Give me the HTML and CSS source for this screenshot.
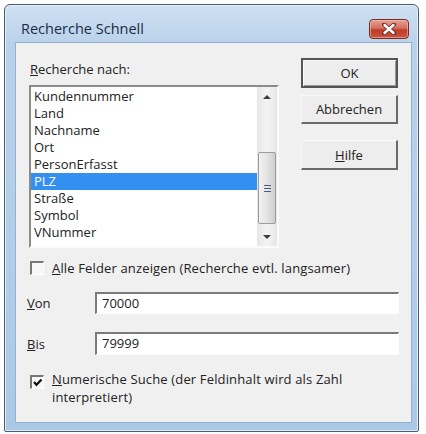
FILE: index.html
```html
<!DOCTYPE html>
<html lang="de">
<head>
<meta charset="utf-8">
<title>Recherche Schnell</title>
<link rel="stylesheet" href="styles.css">
</head>
<body>
<div class="window">
  <div class="titlebar">
    <span class="title">Recherche Schnell</span>
    <button class="close" aria-label="Schließen">
      <svg width="14" height="12" viewBox="0 0 14 12">
        <path d="M2 1.5 L12 10.5 M12 1.5 L2 10.5" stroke="#6b2b22" stroke-width="4" stroke-linecap="round"/>
        <path d="M2.5 2 L11.5 10 M11.5 2 L2.5 10" stroke="#ffffff" stroke-width="2.4" stroke-linecap="round"/>
      </svg>
    </button>
  </div>
  <div class="client">
    <div class="top">
      <div class="left">
        <div class="label"><u>R</u>echerche nach:</div>
        <div class="listbox">
          <ul class="items">
            <li>Kundennummer</li>
            <li>Land</li>
            <li>Nachname</li>
            <li>Ort</li>
            <li>PersonErfasst</li>
            <li class="selected">PLZ</li>
            <li>Straße</li>
            <li>Symbol</li>
            <li>VNummer</li>
          </ul>
          <div class="scrollbar">
            <div class="sb-btn"><span class="tri up"></span></div>
            <div class="track">
              <div class="thumb"><span class="grip"></span></div>
            </div>
            <div class="sb-btn"><span class="tri down"></span></div>
          </div>
        </div>
      </div>
      <div class="buttons">
        <button class="btn default">OK</button>
        <button class="btn cancel">Abbrechen</button>
        <button class="btn help"><u>H</u>ilfe</button>
      </div>
    </div>
    <div class="check all">
      <span class="box"></span>
      <span class="ctext"><u>A</u>lle Felder anzeigen (Recherche evtl. langsamer)</span>
    </div>
    <div class="field von">
      <span class="flabel"><u>V</u>on</span>
      <div class="input">70000</div>
    </div>
    <div class="field bis">
      <span class="flabel"><u>B</u>is</span>
      <div class="input">79999</div>
    </div>
    <div class="check num">
      <span class="box">
        <svg width="11" height="11" viewBox="0 0 11 11"><path d="M2 5 L4.5 7.8 L9.5 2.5" fill="none" stroke="#111" stroke-width="2.2"/></svg>
      </span>
      <span class="ctext"><u>N</u>umerische Suche (der Feldinhalt wird als Zahl<br>interpretiert)</span>
    </div>
  </div>
</div>
</body>
</html>
```

FILE: styles.css
```css
html, body {
  margin: 0;
  padding: 0;
  background: #ffffff;
}

body {
  font-family: "Open Sans", "Noto Sans", "DejaVu Sans", sans-serif;
  font-size: 13px;
  color: #222;
}

.window {
  margin: 4px 0 0 4px;
  width: 413px;
  height: 426px;
  border: 1px solid #4a5c70;
  border-radius: 6px 6px 2px 2px;
  background: linear-gradient(to bottom, #d0e1f2 0px, #b9d2eb 38px, #abc9e7 100%);
  display: flex;
  flex-direction: column;
  box-shadow: inset 0 0 0 1px #e4eef8;
}

.titlebar {
  height: 38px;
  display: flex;
  align-items: flex-start;
  justify-content: space-between;
  flex: none;
}

.title {
  margin: 15px 0 0 16px;
  font-size: 14.5px;
  line-height: 18px;
  color: #1a2c44;
}

.close {
  margin: 14px 9px 0 0;
  width: 40px;
  height: 20px;
  padding: 0;
  border: 1px solid #7a2a20;
  border-radius: 4px;
  background: linear-gradient(to bottom, #e8a090 0%, #d2705f 45%, #bd3d2a 55%, #c9543f 100%);
  box-shadow: inset 0 0 0 1px rgba(255, 210, 200, 0.5);
  display: flex;
  align-items: center;
  justify-content: center;
}

.client {
  margin: 0 7px 0 11px;
  height: 379px;
  background: #f0f0f0;
  box-shadow: 0 0 0 1px #93b1d0;
  flex: none;
}

.top {
  display: flex;
  padding-top: 15px;
}

.left {
  margin-left: 13px;
  width: 250px;
}

.label {
  margin: 3px 0 0 1px;
  line-height: 16px;
  height: 16px;
}

.listbox {
  margin-top: 8px;
  height: 159px;
  border-top: 2px solid #8c8c8c;
  border-left: 2px solid #8c8c8c;
  border-right: 2px solid #fbfbfb;
  border-bottom: 2px solid #fbfbfb;
  background: #fff;
  display: flex;
}

.items {
  list-style: none;
  margin: 0;
  padding: 1px 0 0 0;
  flex: 1;
}

.items li {
  height: 17px;
  line-height: 17px;
  padding-left: 3px;
  white-space: nowrap;
}

.items li.selected {
  background: #3390f0;
  color: #fff;
}

.scrollbar {
  width: 20px;
  display: flex;
  flex-direction: column;
  background: linear-gradient(to right, #e6e6e6, #f3f3f3 50%, #e6e6e6);
}

.sb-btn {
  height: 19px;
  display: flex;
  align-items: center;
  justify-content: center;
  flex: none;
}

.track {
  flex: 1;
  display: flex;
  flex-direction: column;
  justify-content: flex-end;
  padding-bottom: 3px;
}

.thumb {
  height: 70px;
  margin: 0 1px;
  border: 1px solid #9c9c9c;
  border-radius: 2px;
  background: linear-gradient(to right, #f2f2f2, #e2e2e2 55%, #cfcfcf);
  display: flex;
  align-items: center;
  justify-content: center;
}

.grip {
  width: 7px;
  height: 7px;
  background: repeating-linear-gradient(to bottom, #4c5a80 0, #4c5a80 1px, transparent 1px, transparent 3px);
}

.tri {
  width: 0;
  height: 0;
  border-left: 4px solid transparent;
  border-right: 4px solid transparent;
}

.tri.up {
  border-bottom: 4px solid #3d3d3d;
}

.tri.down {
  border-top: 4px solid #3d3d3d;
}

.buttons {
  margin-left: 22px;
  width: 97px;
  display: flex;
  flex-direction: column;
}

.btn {
  font-family: inherit;
  font-size: 13px;
  color: #222;
  width: 97px;
  height: 30px;
  padding: 0;
  background: #ededed;
  border-top: 1px solid #fafafa;
  border-left: 1px solid #fafafa;
  border-right: 2px solid #6a6a6a;
  border-bottom: 2px solid #6a6a6a;
}

.btn.default {
  border: 2px solid #555;
  box-shadow: inset 1px 1px 0 #fafafa, inset -1px -1px 0 #9a9a9a;
}

.btn.cancel {
  margin-top: 7px;
  height: 29px;
}

.btn.help {
  margin-top: 16px;
}

.check {
  display: flex;
  align-items: flex-start;
  margin-left: 14px;
}

.box {
  width: 11px;
  height: 11px;
  background: #f7f7f7;
  border-top: 2px solid #777;
  border-left: 2px solid #777;
  border-right: 1px solid #fff;
  border-bottom: 1px solid #fff;
  flex: none;
  display: flex;
  align-items: center;
  justify-content: center;
}

.ctext {
  margin-left: 8px;
  letter-spacing: 0.15px;
}

.check.all {
  margin-top: 12px;
  line-height: 16px;
}

.check.all .box {
  margin-top: 1px;
}

.check.num {
  margin-top: 15px;
  line-height: 18px;
}

.check.num .box {
  margin-top: 5px;
}

.field {
  display: flex;
  align-items: center;
  margin-left: 11px;
}

.flabel {
  width: 68px;
}

.input {
  width: 296px;
  height: 19px;
  line-height: 19px;
  padding-left: 5px;
  background: #fff;
  border-top: 2px solid #7a7a7a;
  border-left: 2px solid #7a7a7a;
  border-right: 1px solid #fdfdfd;
  border-bottom: 1px solid #fdfdfd;
}

.field.von {
  margin-top: 16px;
}

.field.bis {
  margin-top: 18px;
}

.field.bis .input {
  height: 20px;
}
```
